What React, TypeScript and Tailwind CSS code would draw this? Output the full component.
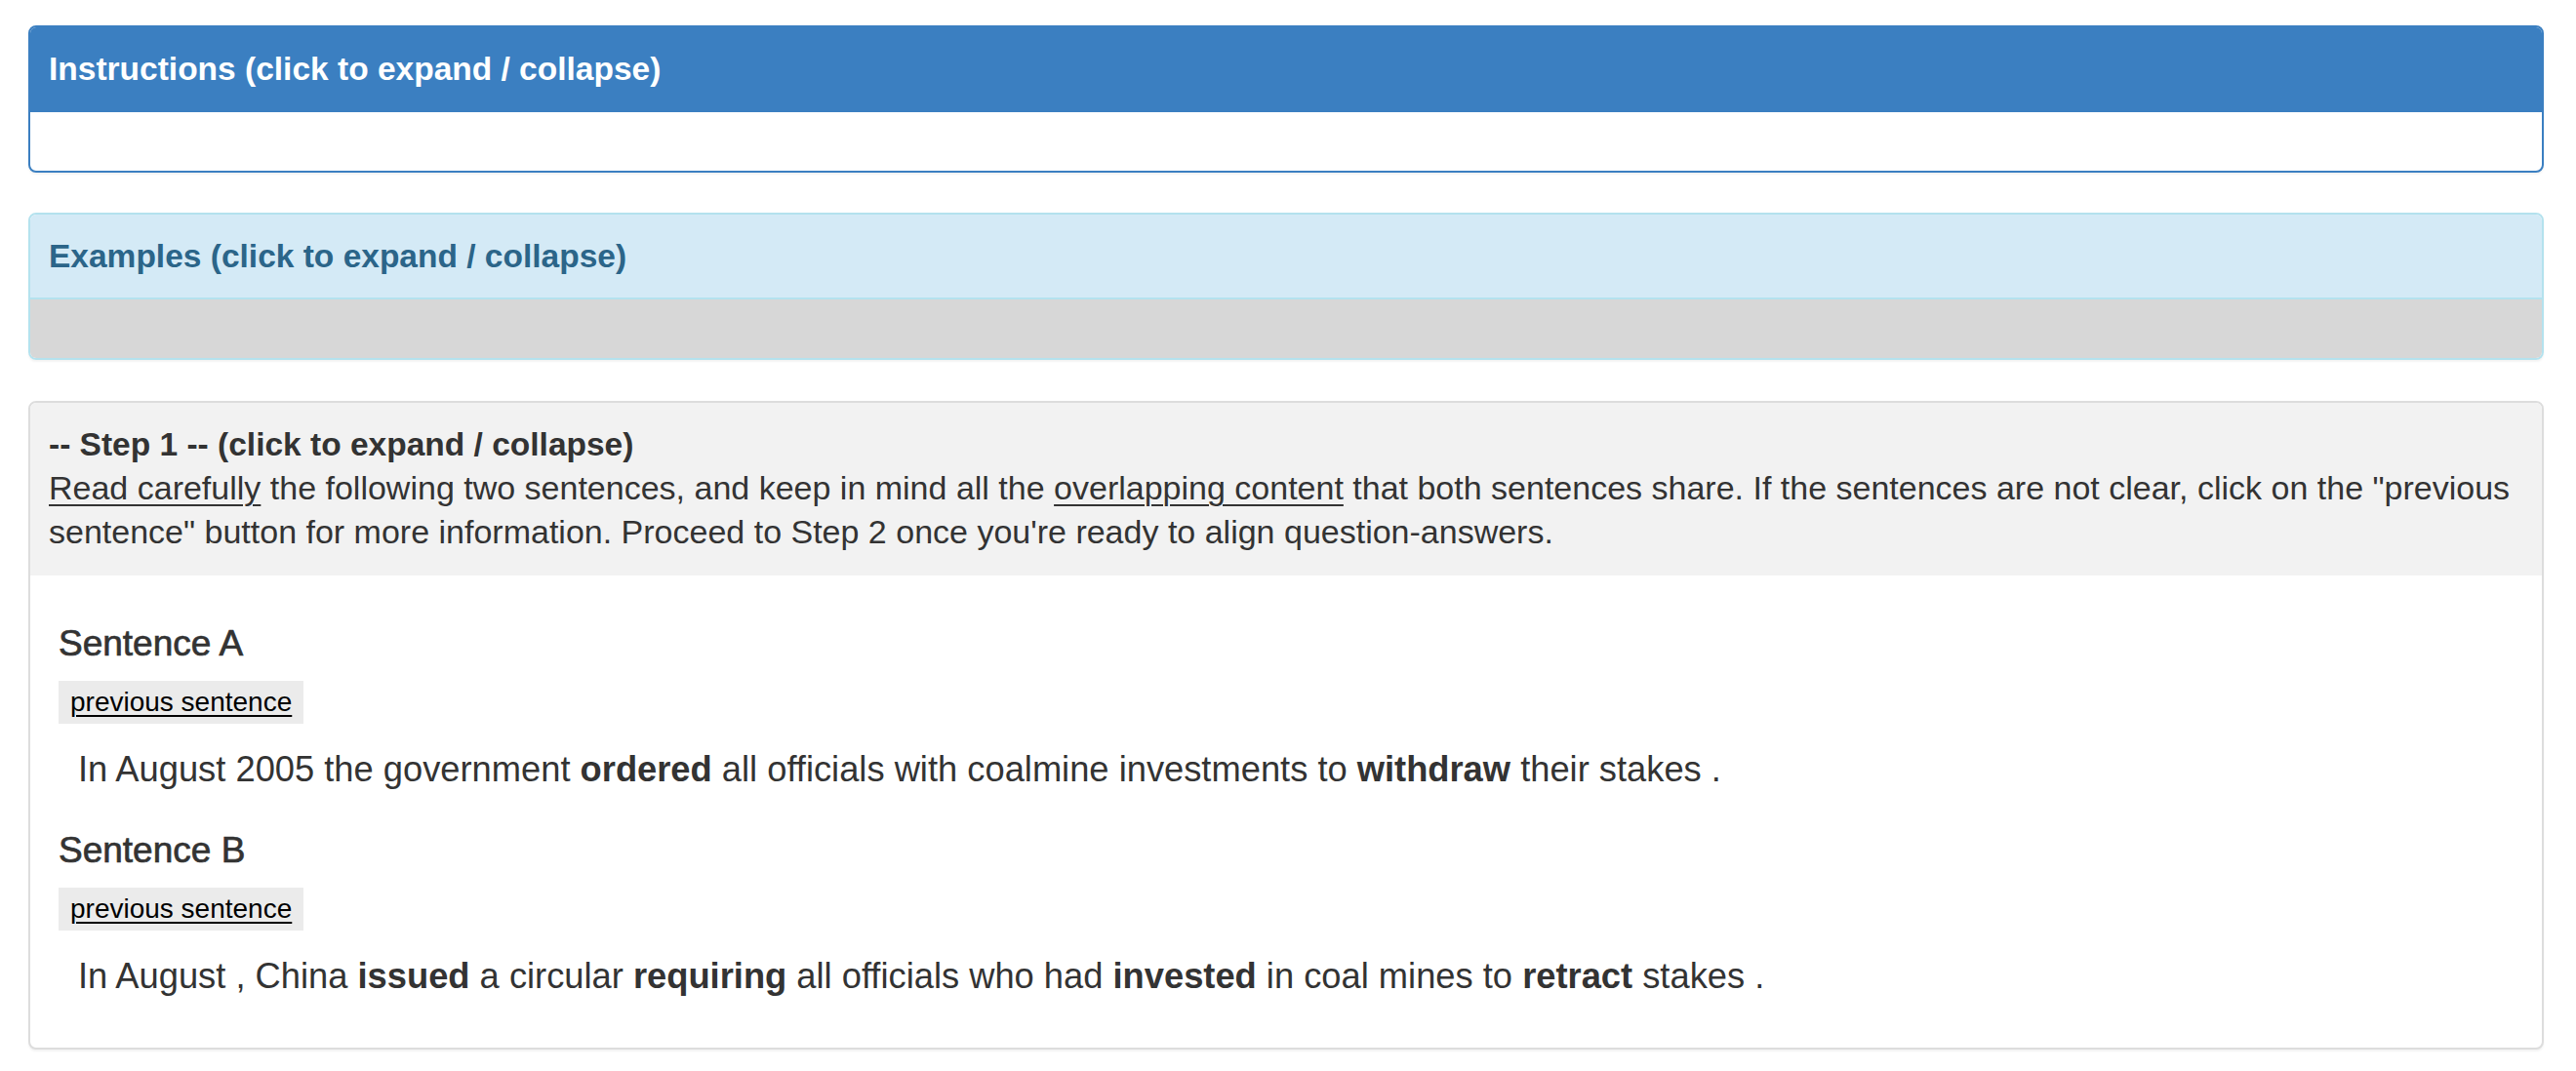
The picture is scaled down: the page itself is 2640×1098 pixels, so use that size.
import React from "react";

const font = { fontFamily: '"Liberation Sans", Arial, sans-serif' };

const SentenceBlock = ({ title, children }: { title: string; children: React.ReactNode }) => {
  return (
    <div className="flex flex-col items-start">
      <h4 className="mt-[20px] mb-[18px] text-[37px] leading-[40px] font-normal text-[#333] [-webkit-text-stroke:0.7px_#333]">
        {title}
      </h4>
      <button className="h-[44px] bg-[#ebebeb] px-[12px] text-[28px] leading-[44px] text-black underline underline-offset-[4px] decoration-[2px]">
        previous sentence
      </button>
      <p className="mt-[21px] mb-[18px] pl-[20px] text-[36.3px] leading-[51px] text-[#333]">{children}</p>
    </div>
  );
};

const App = () => {
  return (
    <div className="min-h-[1098px] bg-white pt-[26px] pl-[29px] pr-[33px]" style={font}>
      {/* Instructions */}
      <div className="rounded-[8px] border-2 border-[#3b7fc1] bg-white shadow-[0_2px_2px_rgba(0,0,0,0.05)]">
        <div className="rounded-t-[6px] border-b-2 border-[#3b7fc1] bg-[#3b7fc1] px-[19px] py-[20px]">
          <h3 className="text-[33.5px] leading-[45px] font-bold text-white">Instructions (click to expand / collapse)</h3>
        </div>
        <div className="h-[60px]" />
      </div>

      {/* Examples */}
      <div className="mt-[41px] overflow-hidden rounded-[8px] border-2 border-[#b4e2ee] shadow-[0_2px_2px_rgba(0,0,0,0.05)]">
        <div className="border-b-2 border-[#b4e2ee] bg-[#d4eaf6] px-[19px] py-[20px]">
          <h3 className="text-[33.5px] leading-[45px] font-bold text-[#2b6589]">Examples (click to expand / collapse)</h3>
        </div>
        <div className="h-[60px] bg-[#d7d7d7]" />
      </div>

      {/* Step 1 */}
      <div className="mt-[42px] overflow-hidden rounded-[8px] border-2 border-[#dddddd] bg-white shadow-[0_2px_2px_rgba(0,0,0,0.05)]">
        <div className="border-b-2 border-[#f2f2f2] bg-[#f2f2f2] px-[19px] py-[20px] text-[34px] leading-[45px] text-[#333]">
          <div className="text-[33.5px] font-bold">-- Step 1 -- (click to expand / collapse)</div>
          <div>
            <span className="underline underline-offset-[5px] decoration-[2px]">Read carefully</span> the following two
            sentences, and keep in mind all the{" "}
            <span className="underline underline-offset-[5px] decoration-[2px]">overlapping content</span> that both
            sentences share. If the sentences are not clear, click on the "previous sentence" button for more
            information. Proceed to Step 2 once you're ready to align question-answers.
          </div>
        </div>
        <div className="px-[29px] py-[30px]">
          <SentenceBlock title="Sentence A">
            In August 2005 the government <b>ordered</b> all officials with coalmine investments to <b>withdraw</b>{" "}
            their stakes .
          </SentenceBlock>
          <SentenceBlock title="Sentence B">
            In August , China <b>issued</b> a circular <b>requiring</b> all officials who had <b>invested</b> in coal
            mines to <b>retract</b> stakes .
          </SentenceBlock>
        </div>
      </div>
    </div>
  );
};

export default App;
